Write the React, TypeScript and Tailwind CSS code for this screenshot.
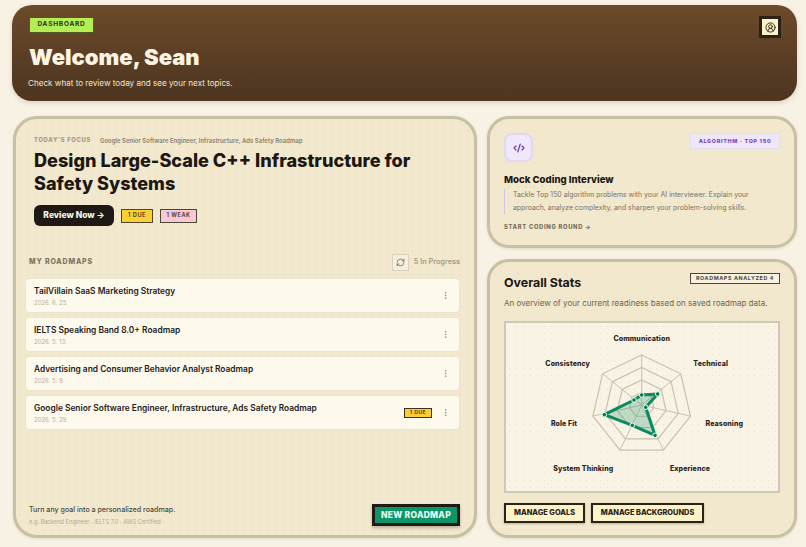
import { CodeXml, EllipsisVertical, RefreshCw, CircleUserRound } from 'lucide-react';

const roadmaps = [
  { title: 'TailVillain SaaS Marketing Strategy', date: '2026. 6. 25.' },
  { title: 'IELTS Speaking Band 8.0+ Roadmap', date: '2026. 5. 13.' },
  { title: 'Advertising and Consumer Behavior Analyst Roadmap', date: '2026. 5. 9.' },
  { title: 'Google Senior Software Engineer, Infrastructure, Ads Safety Roadmap', date: '2026. 5. 29.', due: true },
];

// chart coordinates: svg origin sits at (506, 323) of the page
const cx = 135.7;
const cy = 82;
const R = 50;
const spokes = Array.from({ length: 7 }, (_, i) => {
  const a = -Math.PI / 2 + (i * 2 * Math.PI) / 7;
  return [Math.cos(a), Math.sin(a)];
});
const ring = (r: number) => spokes.map(([x, y]) => `${cx + x * R * r},${cy + y * R * r}`).join(' ');
const data = [
  [135.7, 72],
  [151.7, 71],
  [139.7, 84.3],
  [149, 112.3],
  [126.3, 102.3],
  [98.3, 91.7],
  [128, 77],
];
const labels = [
  { t: 'Communication', x: 135.7, y: 15 },
  { t: 'Technical', x: 204.7, y: 40 },
  { t: 'Reasoning', x: 218.3, y: 100.7 },
  { t: 'Experience', x: 184, y: 145.7 },
  { t: 'System Thinking', x: 77.3, y: 145.7 },
  { t: 'Role Fit', x: 58, y: 100.7 },
  { t: 'Consistency', x: 61.7, y: 40 },
];

function Radar() {
  return (
    <svg viewBox="0 0 272 168" className="w-full h-full block">
      {[1, 0.75, 0.5, 0.25].map((r) => (
        <polygon key={r} points={ring(r)} fill="none" stroke="#c9c1ae" strokeWidth="1.2" />
      ))}
      {spokes.map(([x, y], i) => (
        <line key={i} x1={cx} y1={cy} x2={cx + x * R} y2={cy + y * R} stroke="#c9c1ae" strokeWidth="1" />
      ))}
      <polygon
        points={data.map((p) => p.join(',')).join(' ')}
        fill="#0f8f63"
        fillOpacity="0.25"
        stroke="#0b8a5f"
        strokeWidth="3"
        strokeLinejoin="round"
      />
      {data.map(([x, y], i) => (
        <circle key={i} cx={x} cy={y} r="2.3" fill="#0b7a55" stroke="#f0fff8" strokeWidth="1" />
      ))}
      {labels.map((l) => (
        <text key={l.t} x={l.x} y={l.y} textAnchor="middle" dominantBaseline="central" fontSize="7" fontWeight="800" letterSpacing="0.1" fill="#2a241c">
          {l.t}
        </text>
      ))}
    </svg>
  );
}

export default function App() {
  return (
    <div className="w-[806px] h-[547px] overflow-hidden bg-[#f8f2e5] pl-[12px] pr-[9px] pt-[5px] font-['Inter',sans-serif]">
      <header className="h-[96px] rounded-[20px] bg-gradient-to-b from-[#6c4a2a] to-[#4d3520] shadow-[0_2px_5px_rgba(90,70,40,0.18)] pl-[16px] pr-[16px] pt-[12px] flex justify-between items-start">
        <div>
          <span className="ml-[1px] flex items-center justify-center w-[65px] h-[16px] bg-[#b5ee54] border border-[#4c5a24] text-[#24301a] text-[6.5px] font-bold tracking-[0.12em]">
            DASHBOARD
          </span>
          <h1 className="mt-[9px] ml-[1px] text-[22px] leading-[30px] font-black text-[#fbf4e2]">Welcome, Sean</h1>
          <p className="mt-[4px] text-[8.1px] leading-[14px] text-[#efe6d2]">Check what to review today and see your next topics.</p>
        </div>
        <button className="w-[22px] h-[22px] -mt-[1px] bg-[#fbf3c9] border-[3px] border-[#2b2118] flex items-center justify-center text-[#2b2118]">
          <CircleUserRound size={11} strokeWidth={2} />
        </button>
      </header>

      <main className="mt-[15px] grid grid-cols-[464px_310px] gap-x-[10px] h-[422px] pl-[1px]">
        <section className="rounded-[24px] border-[3px] border-[#c9bfa5] bg-[#f2e8cd] bg-[radial-gradient(#eee2c4_0.7px,transparent_0.8px)] bg-[size:8px_8px] shadow-[0_1px_3px_rgba(90,70,40,0.15)] pl-[9px] pr-[14px] flex flex-col">
          <div className="pl-[9px] pt-[17px]">
            <div className="flex items-center gap-[9px]">
              <span className="text-[5.8px] font-extrabold tracking-[0.12em] text-[#a39a84]">TODAY'S FOCUS</span>
              <span className="text-[6px] font-semibold text-[#8a8270]">Google Senior Software Engineer, Infrastructure, Ads Safety Roadmap</span>
            </div>
            <h2 className="mt-[4px] text-[18.1px] leading-[22.5px] font-extrabold text-[#1c1712]">
              Design Large-Scale C++ Infrastructure for
              <br />
              Safety Systems
            </h2>
            <div className="mt-[11px] flex items-center gap-[7px]">
              <button className="w-[80px] h-[21px] rounded-[6px] bg-[#1e1915] text-[#fbf6e8] text-[8.5px] font-extrabold">Review Now →</button>
              <span className="w-[32px] h-[14px] flex items-center justify-center bg-[#fbcf33] border-[1.5px] border-[#4d4532] text-[#3b3220] text-[5.6px] font-semibold tracking-[0.1em]">1 DUE</span>
              <span className="w-[37px] h-[14px] flex items-center justify-center bg-[#f8c8d8] border-[1.5px] border-[#4d4532] text-[#3b3220] text-[5.6px] font-semibold tracking-[0.1em]">1 WEAK</span>
            </div>
          </div>

          <div className="mt-[28px] pl-[4px] flex items-center justify-between h-[17px]">
            <span className="text-[7px] font-extrabold tracking-[0.12em] text-[#7e7561]">MY ROADMAPS</span>
            <div className="flex items-center gap-[5px]">
              <button className="w-[17px] h-[17px] bg-[#f6efdd] border border-[#d9d1bb] flex items-center justify-center text-[#4d463a]">
                <RefreshCw size={9} strokeWidth={1.6} />
              </button>
              <span className="text-[7.3px] font-semibold text-[#a39a86]">5 In Progress</span>
            </div>
          </div>

          <ul className="mt-[7px] flex flex-col gap-[4px]">
            {roadmaps.map((r) => (
              <li key={r.title} className="h-[35px] rounded-[4px] bg-[#fdf9ec] border border-[#ebe4d0] pl-[8px] pr-[9px] flex items-center justify-between">
                <div className="self-start pt-[6px]">
                  <div className="text-[8.4px] leading-[12px] font-semibold text-[#25201a]">{r.title}</div>
                  <div className="mt-[1px] text-[6px] leading-[9px] text-[#b5ae9e]">{r.date}</div>
                </div>
                <div className="flex items-center gap-[9px]">
                  {r.due && (
                    <span className="w-[28px] h-[10px] flex items-center justify-center bg-[#fbcf33] border border-[#3b3220] text-[#3b3220] text-[5.2px] font-semibold tracking-[0.08em]">1 DUE</span>
                  )}
                  <EllipsisVertical size={9} className="text-[#8f897a]" />
                </div>
              </li>
            ))}
          </ul>

          <div className="mt-auto mb-[9px] pl-[4px] flex items-center justify-between">
            <div>
              <div className="text-[7.1px] leading-[11px] font-medium text-[#4f483b]">Turn any goal into a personalized roadmap.</div>
              <div className="mt-[2px] text-[5.7px] leading-[9px] text-[#b3ab98]">e.g. Backend Engineer · IELTS 7.0 · AWS Certified</div>
            </div>
            <button className="w-[88px] h-[22px] bg-[#0d9568] border-[3px] border-[#1f1a15] text-[#eafff4] text-[8.5px] font-extrabold tracking-[0.03em] shadow-[0_2px_3px_rgba(60,50,30,0.3)]">
              NEW ROADMAP
            </button>
          </div>
        </section>

        <div className="flex flex-col gap-[11px]">
          <section className="h-[132px] rounded-[22px] border-[3px] border-[#c9bfa5] bg-[#f2e8cd] bg-[radial-gradient(#eee2c4_0.7px,transparent_0.8px)] bg-[size:8px_8px] shadow-[0_1px_3px_rgba(90,70,40,0.15)] pl-[14px] pr-[14px] pt-[14px]">
            <div className="flex items-start justify-between">
              <div className="w-[29px] h-[29px] rounded-[8px] bg-[#efe8fb] border-[2px] border-[#e2d8f5] flex items-center justify-center text-[#6b32b8]">
                <CodeXml size={12} strokeWidth={2.2} />
              </div>
              <span className="w-[90px] h-[16px] flex items-center justify-center bg-[#eee7f8] border border-[#e4dcf4] text-[#7a45c0] text-[5.4px] font-extrabold tracking-[0.13em]">
                ALGORITHM · TOP 150
              </span>
            </div>
            <h3 className="mt-[10px] text-[9.6px] leading-[15px] font-extrabold text-[#1c1712]">Mock Coding Interview</h3>
            <p className="mt-[2px] border-l border-[#cfc4e2] pl-[8px] text-[6.9px] leading-[12.6px] text-[#7c7462]">
              Tackle Top 150 algorithm problems with your AI interviewer. Explain your approach, analyze complexity, and sharpen your problem-solving skills.
            </p>
            <div className="mt-[9px] text-[5.8px] font-extrabold tracking-[0.12em] text-[#766e5c]">START CODING ROUND →</div>
          </section>

          <section className="h-[279px] rounded-[22px] border-[3px] border-[#c9bfa5] bg-[#f2e8cd] bg-[radial-gradient(#eee2c4_0.7px,transparent_0.8px)] bg-[size:8px_8px] shadow-[0_1px_3px_rgba(90,70,40,0.15)] px-[14px] pt-[11px]">
            <div className="flex items-start justify-between">
              <h3 className="mt-[1px] text-[12.4px] leading-[18px] font-bold text-[#1c1712]">Overall Stats</h3>
              <span className="w-[90px] h-[11px] flex items-center justify-center bg-[#f7f1e2] border-[1.5px] border-[#4d4638] text-[#4d4638] text-[5.3px] font-bold tracking-[0.12em]">
                ROADMAPS ANALYZED 4
              </span>
            </div>
            <p className="mt-[5px] text-[8px] leading-[13px] text-[#6c6453]">An overview of your current readiness based on saved roadmap data.</p>
            <div className="mt-[11px] h-[172px] border-[2px] border-[#cfc8b6] bg-[#f8f3e5] bg-[radial-gradient(#e8e1cf_0.6px,transparent_0.7px)] bg-[size:7px_7px]">
              <Radar />
            </div>
            <div className="mt-[10px] flex gap-[6px]">
              <button className="w-[81px] h-[20px] bg-[#fdf3c8] border-[2.5px] border-[#2b2118] text-[#2b2118] text-[7.4px] font-extrabold shadow-[0_1px_2px_rgba(60,50,30,0.3)]">MANAGE GOALS</button>
              <button className="w-[113px] h-[20px] bg-[#fdf3c8] border-[2.5px] border-[#2b2118] text-[#2b2118] text-[7.4px] font-extrabold shadow-[0_1px_2px_rgba(60,50,30,0.3)]">MANAGE BACKGROUNDS</button>
            </div>
          </section>
        </div>
      </main>
    </div>
  );
}
